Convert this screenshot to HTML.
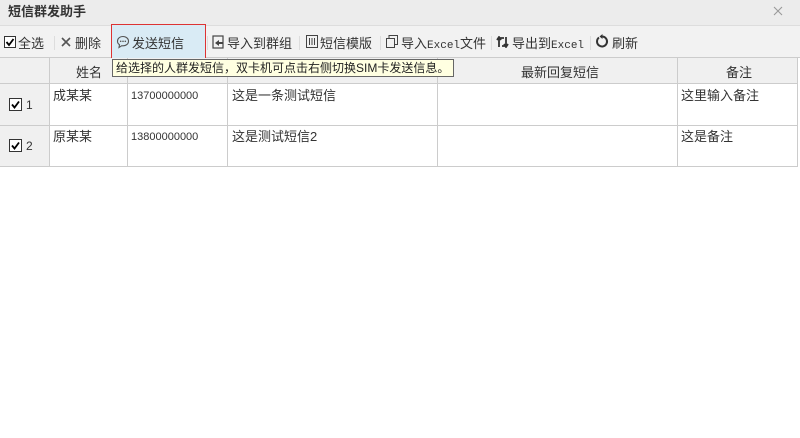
<!DOCTYPE html>
<html><head><meta charset="utf-8"><style>
*{margin:0;padding:0;box-sizing:border-box}
body{width:800px;height:438px;background:#fff;font-family:"Liberation Sans","Noto Sans CJK SC",sans-serif;font-size:12px;color:#333;position:relative;overflow:hidden}
.a{position:absolute;white-space:nowrap;line-height:16px}
.title{left:0;top:0;width:800px;height:26px;background:#ececec;border-bottom:1px solid #ddd}
.tb{left:0;top:26px;width:800px;height:32px;background:#f2f2f2;border-bottom:1px solid #ccc}
.hd{left:0;top:58px;width:798px;height:26px;background:#f0f0f0;border-bottom:1px solid #ccc}
.vl{position:absolute;width:1px;background:#ccc}
.hl{position:absolute;height:1px;background:#ccc}
.cb{position:absolute}
.sep{position:absolute;top:36px;width:1px;height:14px;background:#ddd}
.t{font-size:13px;top:36px}
</style></head><body>
<div class="a title"></div>
<div class="a" style="left:8px;top:4px;font-size:13px;font-weight:bold;color:#333">短信群发助手</div>
<svg class="a" style="left:773px;top:6px" width="10" height="10" viewBox="0 0 10 10"><path d="M1 1l8 8M9 1l-8 8" stroke="#999" stroke-width="1.1"/></svg>
<div class="a tb"></div>
<div class="a" style="left:111px;top:24px;width:95px;height:35px;background:#d9ebf5;border:1px solid #d33"></div>
<svg class="cb" style="left:4px;top:36px" width="12" height="12" viewBox="0 0 12 12"><rect x=".5" y=".5" width="11" height="11" fill="#fff" stroke="#333"/><path d="M2.5 6l2.5 3 4.5-6" fill="none" stroke="#000" stroke-width="1.8"/></svg>
<div class="a t" style="left:18px">全选</div>
<div class="sep" style="left:54px"></div>
<svg class="a" style="left:61px;top:37px" width="10" height="10" viewBox="0 0 10 10"><path d="M1 1l8 8M9 1l-8 8" stroke="#555" stroke-width="1.6"/></svg>
<div class="a t" style="left:75px">删除</div>
<svg class="a" style="left:116px;top:35px" width="14" height="14" viewBox="0 0 14 14"><path d="M7 1.5C3.7 1.5 1.5 3.6 1.5 6.2c0 1.5.8 2.7 2 3.5L3 12.5l2.8-1.8c.4.1.8.1 1.2.1 3.3 0 5.5-2.1 5.5-4.6S10.3 1.5 7 1.5z" fill="none" stroke="#555" stroke-width="1.1"/><circle cx="4.7" cy="6.3" r=".8" fill="#555"/><circle cx="7" cy="6.3" r=".8" fill="#555"/><circle cx="9.3" cy="6.3" r=".8" fill="#555"/></svg>
<div class="a t" style="left:132px">发送短信</div>
<div class="sep" style="left:207px"></div>
<svg class="a" style="left:212px;top:35px" width="13" height="14" viewBox="0 0 13 14"><rect x="1" y="1" width="10" height="12" fill="none" stroke="#444" stroke-width="1.2"/><path d="M3 8l4-3v2h4v2H7v2z" fill="#444"/></svg>
<div class="a t" style="left:227px">导入到群组</div>
<div class="sep" style="left:299px"></div>
<svg class="a" style="left:306px;top:35px" width="12" height="13" viewBox="0 0 12 13"><rect x=".5" y=".5" width="11" height="12" fill="none" stroke="#444"/><path d="M3.5 3v7M6 3v7M8.5 3v7" stroke="#444"/></svg>
<div class="a t" style="left:320px">短信模版</div>
<div class="sep" style="left:380px"></div>
<svg class="a" style="left:386px;top:35px" width="12" height="13" viewBox="0 0 12 13"><rect x=".5" y="3.5" width="8" height="9" fill="none" stroke="#444"/><path d="M3 3.5V.5h8.5v9H8.5" fill="none" stroke="#444"/></svg>
<div class="a t" style="left:401px">导入<span style="font-family:'Liberation Mono';font-size:11px">Excel</span>文件</div>
<div class="sep" style="left:491px"></div>
<svg class="a" style="left:496px;top:36px" width="14" height="12" viewBox="0 0 14 12"><path d="M3 11V2M1 4l2-3 2 3M10 1v9M8 8l2 3 2-3M3 2h5M6 10h4" fill="none" stroke="#333" stroke-width="1.8"/></svg>
<div class="a t" style="left:512px">导出到<span style="font-family:'Liberation Mono';font-size:11px">Excel</span></div>
<div class="sep" style="left:590px"></div>
<svg class="a" style="left:595px;top:34px" width="15" height="15" viewBox="0 0 15 15"><path d="M4 3.5A5 5 0 1 0 7.5 2.5" fill="none" stroke="#333" stroke-width="2"/><path d="M7.5 0v5L4.5 2.5z" fill="#333"/></svg>
<div class="a t" style="left:612px">刷新</div>
<div class="a hd"></div>
<div class="a" style="left:76px;top:65px;font-size:13px">姓名</div>
<div class="a" style="left:521px;top:65px;font-size:13px">最新回复短信</div>
<div class="a" style="left:726px;top:65px;font-size:13px">备注</div>
<div class="a" style="left:0;top:84px;width:49px;height:82px;background:#f0f0f0"></div>
<div class="hl" style="left:0;top:125px;width:798px"></div>
<div class="hl" style="left:0;top:166px;width:798px"></div>
<div class="vl" style="left:49px;top:58px;height:108px"></div>
<div class="vl" style="left:127px;top:58px;height:108px"></div>
<div class="vl" style="left:227px;top:58px;height:108px"></div>
<div class="vl" style="left:437px;top:58px;height:108px"></div>
<div class="vl" style="left:677px;top:58px;height:108px"></div>
<div class="vl" style="left:797px;top:58px;height:108px"></div>
<svg class="cb" style="left:9px;top:98px" width="13" height="13" viewBox="0 0 13 13"><rect x=".5" y=".5" width="12" height="12" fill="#fff" stroke="#333"/><path d="M3 6.5l2.5 3 4.5-6" fill="none" stroke="#000" stroke-width="1.8"/></svg><div class="a" style="left:26px;top:97px">1</div>
<svg class="cb" style="left:9px;top:139px" width="13" height="13" viewBox="0 0 13 13"><rect x=".5" y=".5" width="12" height="12" fill="#fff" stroke="#333"/><path d="M3 6.5l2.5 3 4.5-6" fill="none" stroke="#000" stroke-width="1.8"/></svg><div class="a" style="left:26px;top:138px">2</div>
<div class="a" style="left:53px;top:88px;font-size:13px">成某某</div>
<div class="a" style="left:131px;top:88px;font-size:11px">13700000000</div>
<div class="a" style="left:232px;top:88px;font-size:13px">这是一条测试短信</div>
<div class="a" style="left:681px;top:88px;font-size:13px">这里输入备注</div>
<div class="a" style="left:53px;top:129px;font-size:13px">原某某</div>
<div class="a" style="left:131px;top:129px;font-size:11px">13800000000</div>
<div class="a" style="left:232px;top:129px;font-size:13px">这是测试短信2</div>
<div class="a" style="left:681px;top:129px;font-size:13px">这是备注</div>
<div class="a" style="left:112px;top:59px;width:342px;height:18px;background:#ffffe1;border:1px solid #666;font-size:12px;line-height:16px;padding-left:3px;color:#222">给选择的人群发短信，双卡机可点击右侧切换SIM卡发送信息。</div>
</body></html>
